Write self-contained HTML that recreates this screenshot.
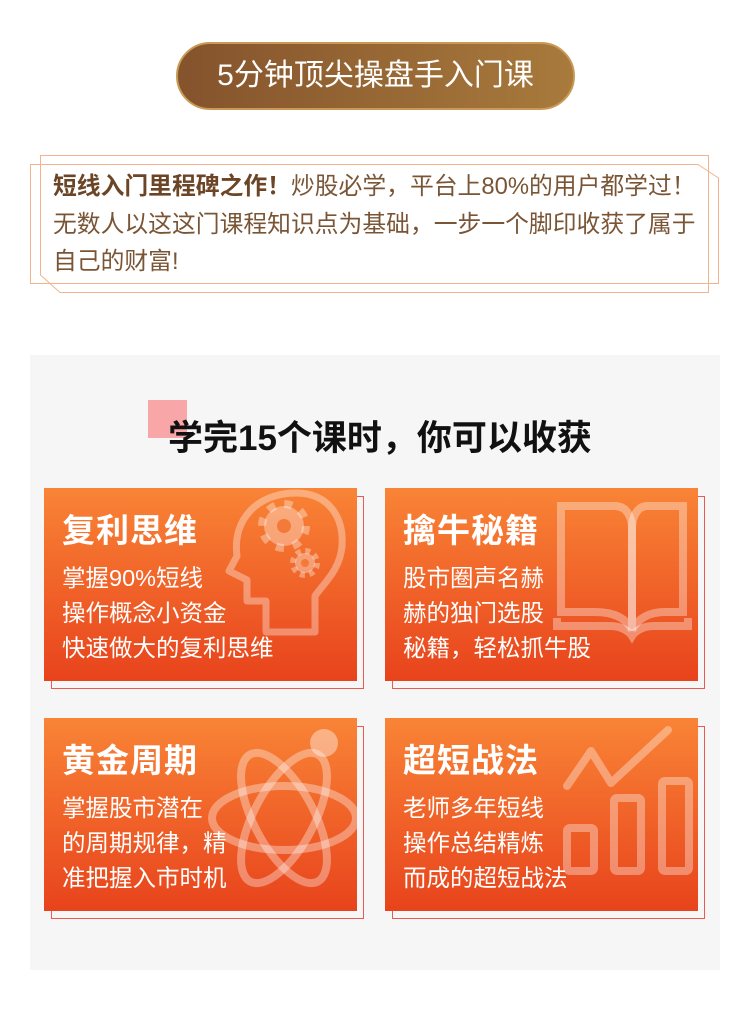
<!DOCTYPE html>
<html><head><meta charset="utf-8"><style>
*{margin:0;padding:0;box-sizing:border-box}
body{width:750px;height:1026px;background:#fff;font-family:"Liberation Sans","Noto Sans CJK SC",sans-serif;position:relative;overflow:hidden}
.pill{position:absolute;left:176px;top:42px;width:399px;height:68px;border-radius:34px;background:linear-gradient(90deg,#85532c,#a87a3c);border:2px solid #c99a55;color:#fff;font-size:30px;text-align:center;line-height:63px}
.para{position:absolute;left:53px;top:168px;width:680px;font-size:23.8px;line-height:37.5px;color:#7a5535;white-space:nowrap}
.para b{color:#6b4526}
.panel{position:absolute;left:30px;top:355px;width:690px;height:615px;background:#f6f6f6}
.sq{position:absolute;left:148px;top:400px;width:39px;height:38px;background:#f8a6a8}
.h2{position:absolute;left:168px;top:410px;font-size:35px;font-weight:bold;color:#111;white-space:nowrap}
.card{position:absolute;width:313px;height:193px;background:linear-gradient(180deg,#f98436,#e8431c);color:#fff;overflow:hidden}
.ol{position:absolute;width:313px;height:193px;border:1px solid #ea5a50}
.card .t{position:absolute;left:18px;top:16px;font-size:33px;font-weight:bold;letter-spacing:1px}
.card .b{position:absolute;left:18px;top:73px;font-size:23.5px;line-height:35px;z-index:2;white-space:nowrap}
.card svg{position:absolute;left:0;top:0}
</style></head><body>
<div class="pill">5分钟顶尖操盘手入门课</div>
<svg style="position:absolute;left:0;top:0" width="750" height="300">
<polygon points="40.5,155.5 708.5,155.5 708.5,292.5 60,292.5 40.5,275" fill="none" stroke="#f3b48d" stroke-width="1"/>
<polygon points="30.5,164.5 698,164.5 718.5,178 718.5,283.5 30.5,283.5" fill="none" stroke="#f3b48d" stroke-width="1"/>
</svg>
<div class="para"><b>短线入门里程碑之作！</b>炒股必学，平台上80%的用户都学过！<br>无数人以这这门课程知识点为基础，一步一个脚印收获了属于<br>自己的财富!</div>
<div class="panel"></div>
<div class="sq"></div>
<div class="h2">学完15个课时，你可以收获</div>

<div class="ol" style="left:51px;top:496px"></div>
<div class="card" style="left:44px;top:488px">
<svg width="313" height="193"><g fill="none" stroke="rgba(255,255,255,0.35)" stroke-width="7" stroke-linejoin="round">
<path d="M222,144 V113 H203 V92 L185,83 L193,68 C188,30 215,5 252,5 C285,5 300,30 298,58 C296,82 280,95 271,108 V144 Z"/></g>
<g fill="rgba(255,255,255,0.35)"><circle cx="240" cy="38" r="20"/><circle cx="261" cy="75" r="10"/></g>
<circle cx="240" cy="38" r="22" fill="none" stroke="rgba(255,255,255,0.35)" stroke-width="8" stroke-dasharray="8 9.3"/>
<circle cx="261" cy="75" r="12" fill="none" stroke="rgba(255,255,255,0.35)" stroke-width="6" stroke-dasharray="5 4.4"/>
<g fill="#f37a38"><circle cx="240" cy="38" r="7"/><circle cx="261" cy="75" r="4"/></g>
</svg>
<div class="t">复利思维</div>
<div class="b">掌握90%短线<br>操作概念小资金<br>快速做大的复利思维</div></div>

<div class="ol" style="left:392px;top:496px"></div>
<div class="card" style="left:385px;top:488px">
<svg width="313" height="193"><g fill="none" stroke="rgba(255,255,255,0.35)" stroke-width="8">
<path d="M176,18 H230 C242,18 247,30 247,40 V142 C240,128 225,124 210,124 H176 Z"/>
<path d="M298,18 H262 C252,18 247,30 247,40 V142 C254,128 268,124 280,124 H298 Z"/>
<path d="M172,130 V138 H225 C236,138 244,143 247,148 C250,143 258,138 269,138 H303 V130"/></g></svg>
<div class="t">擒牛秘籍</div>
<div class="b">股市圈声名赫<br>赫的独门选股<br>秘籍，轻松抓牛股</div></div>

<div class="ol" style="left:51px;top:726px"></div>
<div class="card" style="left:44px;top:718px">
<svg width="313" height="193"><g fill="none" stroke="rgba(255,255,255,0.35)" stroke-width="8">
<ellipse cx="240" cy="100" rx="72" ry="32"/>
<ellipse cx="240" cy="100" rx="72" ry="30" transform="rotate(62 240 100)"/>
<ellipse cx="240" cy="100" rx="72" ry="30" transform="rotate(-62 240 100)"/></g>
<circle cx="280" cy="25" r="14" fill="rgba(255,255,255,0.4)"/></svg>
<div class="t">黄金周期</div>
<div class="b">掌握股市潜在<br>的周期规律，精<br>准把握入市时机</div></div>

<div class="ol" style="left:392px;top:726px"></div>
<div class="card" style="left:385px;top:718px">
<svg width="313" height="193"><g fill="none" stroke="rgba(255,255,255,0.35)" stroke-width="8" stroke-linecap="round" stroke-linejoin="round">
<path d="M182,68 L206,33 L226,65 L283,12"/>
<rect x="182" y="110" width="27" height="43" rx="3"/>
<rect x="229" y="80" width="27" height="73" rx="3"/>
<rect x="277" y="63" width="27" height="90" rx="3"/></g></svg>
<div class="t">超短战法</div>
<div class="b">老师多年短线<br>操作总结精炼<br>而成的超短战法</div></div>
</body></html>
